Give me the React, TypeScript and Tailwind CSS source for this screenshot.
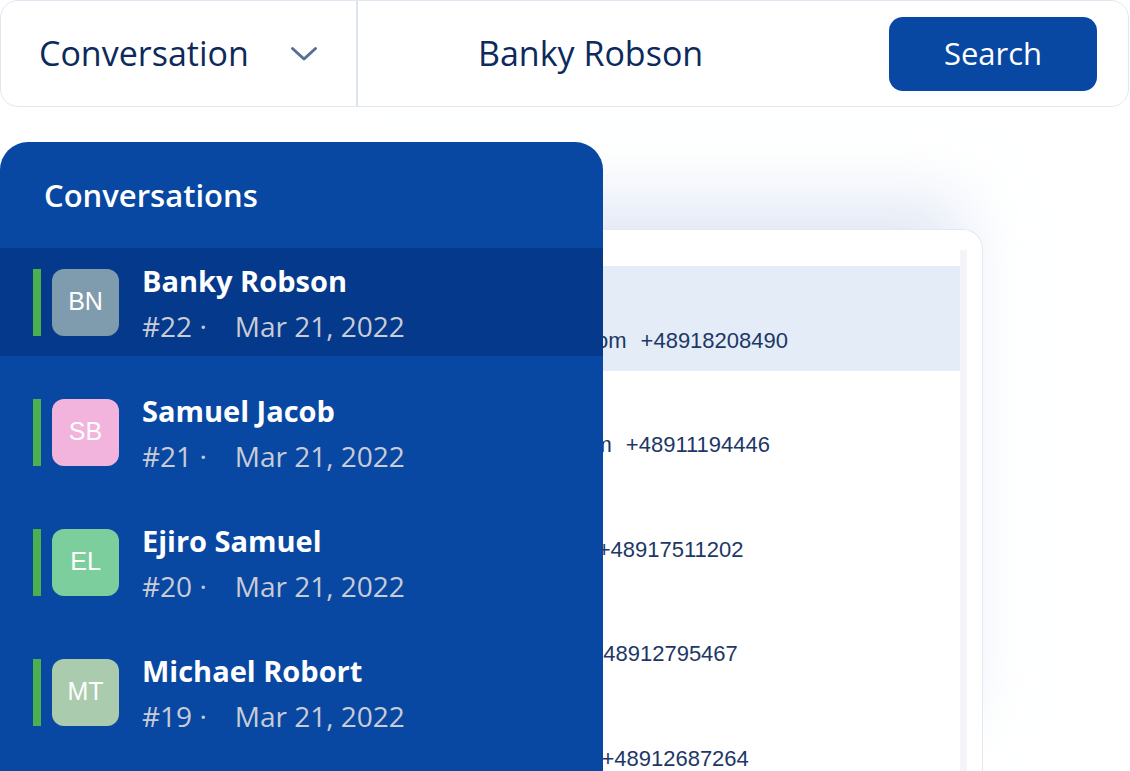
const contacts = [
  { initials: "BN", name: "Banky Robson", num: "#22", color: "bg-[#7f9bae]", active: true },
  { initials: "SB", name: "Samuel Jacob", num: "#21", color: "bg-[#f2b3dd]" },
  { initials: "EL", name: "Ejiro Samuel", num: "#20", color: "bg-[#7ccf9c]" },
  { initials: "MT", name: "Michael Robort", num: "#19", color: "bg-[#aacbad]" },
];

const rows = [
  { email: "bankyrobson@gmail.com", phone: "+48918208490", active: true },
  { email: "samueljacob@mail.com", phone: "+48911194446" },
  { email: "ejirosam@gmail.com", phone: "+48917511202" },
  { email: "michael@gmail.com", phone: "+48912795467" },
  { email: "davidkim@gmail.com", phone: "+48912687264" },
];

export default function App() {
  return (
    <div className="w-[1130px] h-[771px] overflow-hidden bg-white font-['Open_Sans',sans-serif]">
      {/* Search bar */}
      <header className="h-[107px] w-[1129px] rounded-[18px] border border-[#e1e7f2] bg-white flex items-center">
        <div className="w-[357px] h-full flex items-center justify-between pl-[38px] pr-[38px] border-r-2 border-[#dde3ef]">
          <span className="text-[34px] text-[#0c2a5c]">Conversation</span>
          <svg width="28" height="16" viewBox="0 0 28 16" fill="none">
            <path d="M2.5 2.5 L14 13 L25.5 2.5" stroke="#587090" strokeWidth="3" strokeLinecap="round" strokeLinejoin="round" />
          </svg>
        </div>
        <div className="flex-1 pl-[120px] text-[34px] text-[#0c2a5c]">Banky Robson</div>
        <button className="mr-[31px] w-[208px] h-[74px] rounded-[14px] bg-[#0848a3] text-white text-[31px]">
          Search
        </button>
      </header>

      <div className="grid">
        {/* Contacts table behind */}
        <section className="col-start-1 row-start-1 ml-[358px] mt-[122px] w-[625px] h-[560px] bg-white rounded-tr-[20px] border-t border-r border-[#e3e9f3] shadow-[0_-50px_60px_-20px_rgba(205,217,238,0.6)] flex pt-[36px] font-['Liberation_Sans',sans-serif]">
          <div className="flex-1 flex flex-col">
            {rows.map((r) => (
              <div
                key={r.phone}
                className={`h-[105px] flex items-end pl-[20px] pb-[17px] text-[22px] leading-[26px] text-[#1d3866] ${r.active ? "bg-[#e4ecf8]" : ""}`}
              >
                <span>{r.email}</span>
                <span className="ml-[14px]">{r.phone}</span>
              </div>
            ))}
          </div>
          <div className="w-[7px] mt-[-16px] bg-[#f3f5f8]" />
          <div className="w-[15px]" />
        </section>

        {/* Conversations panel */}
        <aside className="col-start-1 row-start-1 mt-[35px] w-[603px] h-[629px] rounded-t-[28px] bg-[#0848a3] text-white">
          <h2 className="h-[106px] flex items-center pl-[44px] text-[31px] font-semibold">Conversations</h2>
          <ul className="flex flex-col gap-[22px]">
            {contacts.map((c) => (
              <li
                key={c.num}
                className={`h-[108px] flex items-center pl-[33px] ${c.active ? "bg-[#04398b]" : ""}`}
              >
                <span className="w-[8px] h-[67px] bg-[#4caf50]" />
                <span
                  className={`ml-[11px] w-[67px] h-[67px] rounded-[12px] ${c.color} flex items-center justify-center text-[25px] font-['Liberation_Sans',sans-serif]`}
                >
                  {c.initials}
                </span>
                <div className="ml-[23px] flex flex-col pt-[2px]">
                  <span className="text-[29px] font-bold leading-[34px]">{c.name}</span>
                  <span className="mt-[11px] text-[28px] leading-[34px] text-[#c8ccd6]">
                    {c.num} ·<span className="ml-[28px]">Mar 21, 2022</span>
                  </span>
                </div>
              </li>
            ))}
          </ul>
        </aside>
      </div>
    </div>
  );
}
